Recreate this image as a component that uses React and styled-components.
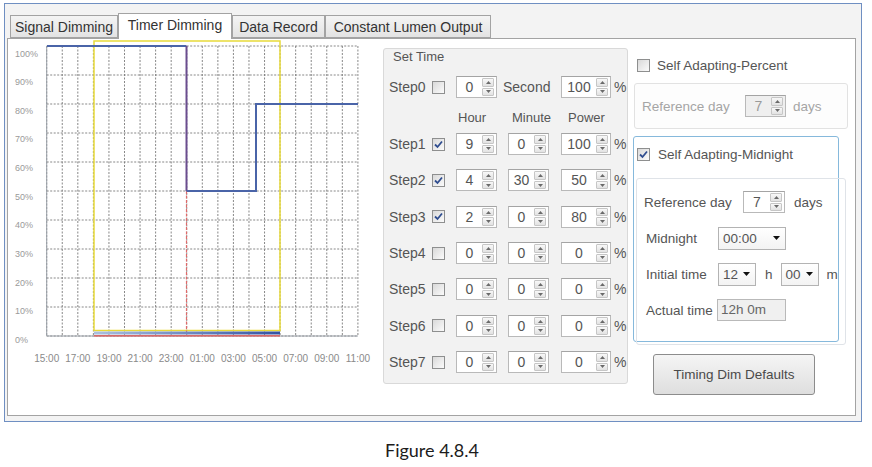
import styled, { createGlobalStyle } from 'styled-components';

const GlobalStyle = createGlobalStyle`
  html, body {
    margin: 0;
    padding: 0;
    background: #fff;
  }
  body {
    font-family: "Liberation Sans", Arial, sans-serif;
    color: #4a4a4a;
  }
  * {
    box-sizing: border-box;
  }
`;

const Window = styled.div`
  margin: 3px 0 0 4px;
  width: 858px;
  height: 419px;
  border: 1px solid #6f8fc2;
  background: #f3f3f3;
  padding: 0 5px 5px 2px;
  display: flex;
  flex-direction: column;
`;

const TabStrip = styled.div`
  display: flex;
  align-items: flex-end;
  height: 34px;
  padding: 9px 0 0 3px;
`;

const Tab = styled.div`
  position: relative;
  z-index: ${(p) => (p.$active ? 2 : 1)};
  width: ${(p) => p.$w}px;
  height: ${(p) => (p.$active ? 26 : 23)}px;
  margin-bottom: ${(p) => (p.$active ? -1 : 0)}px;
  border: 1px solid #a3a3a3;
  border-bottom: ${(p) => (p.$active ? 'none' : '1px solid #a3a3a3')};
  background: ${(p) => (p.$active ? '#fff' : 'linear-gradient(#f4f4f4, #e3e3e3)')};
  font-size: 14px;
  color: #333;
  text-align: center;
  line-height: 22px;
  white-space: nowrap;
`;

const Page = styled.div`
  width: 849px;
  height: 378px;
  border: 1px solid #a3a3a3;
  background: #fff;
  display: flex;
  align-items: flex-start;
`;

const ChartSvg = styled.svg`
  display: block;
  flex-shrink: 0;
  font-family: "Liberation Sans", Arial, sans-serif;
`;

const SetTimeGroup = styled.div`
  margin: 9px 0 0 5px;
  width: 245px;
  height: 336px;
  border: 1px solid #d9d9d9;
  border-radius: 3px;
  background: #f2f2f2;
  flex-shrink: 0;
`;

const GroupTitle = styled.div`
  height: 20px;
  padding-left: 9px;
  font-size: 13px;
  line-height: 16px;
  color: #555;
`;

const StepRow = styled.div`
  display: grid;
  grid-template-columns: 43px 24px 52px 53px 53px auto;
  align-items: center;
  height: ${(p) => p.$h}px;
  padding-left: 5px;
`;

const StepLabel = styled.span`
  font-size: 14px;
  color: #555;
`;

const HeadCell = styled.span`
  font-size: 13px;
  color: #555;
  padding-left: ${(p) => p.$pl}px;
  padding-top: 4px;
`;

const SecondText = styled.span`
  font-size: 14px;
  color: #555;
  margin-left: -5px;
`;

const Percent = styled.span`
  font-size: 14px;
  color: #555;
`;

const Box = styled.span`
  width: 13px;
  height: 13px;
  border: 1px solid #8e8f8f;
  background: linear-gradient(135deg, #d9d9d9, #fbfbfb);
  display: inline-flex;
  align-items: center;
  justify-content: center;
  flex-shrink: 0;
`;

const SpinBox = styled.div`
  display: flex;
  width: ${(p) => p.$w}px;
  height: 22px;
  border: 1px solid #b9b9b9;
  border-top-color: #a4a4a4;
  background: ${(p) => (p.$disabled ? '#efefef' : '#fff')};
  flex-shrink: 0;
`;

const SpinValue = styled.span`
  flex: 1;
  text-align: center;
  font-size: 14px;
  line-height: 20px;
  color: ${(p) => (p.$disabled ? '#9a9a9a' : '#555')};
`;

const SpinButtons = styled.div`
  display: flex;
  flex-direction: column;
  gap: 1px;
  width: 12px;
  margin: 1px 2px 1px 0;
`;

const SpinButton = styled.div`
  flex: 1;
  border: 1px solid #c6c6c6;
  border-radius: 1px;
  background: linear-gradient(#f8f8f8, #e2e2e2);
  display: flex;
  align-items: center;
  justify-content: center;
`;

const RightCol = styled.div`
  margin-left: 5px;
  width: 215px;
  display: flex;
  flex-direction: column;
  align-items: flex-start;
  flex-shrink: 0;
`;

const CheckRow = styled.div`
  display: flex;
  align-items: center;
  gap: ${(p) => p.$gap}px;
  height: ${(p) => p.$h}px;
  margin-top: ${(p) => p.$mt || 0}px;
  padding-left: ${(p) => p.$pl}px;
`;

const CheckText = styled.span`
  font-size: 13.5px;
  color: #555;
`;

const PlainGroup = styled.div`
  margin: 8px 0 0 1px;
  width: 214px;
  height: 46px;
  border: 1px solid #e2e2e2;
  border-radius: 3px;
  background: #fdfdfd;
  display: flex;
  align-items: center;
  padding-left: 7px;
`;

const BlueBox = styled.div`
  margin-top: 7px;
  width: 206px;
  height: 206px;
  border: 1px solid #86b9dc;
  border-radius: 3px;
  background: #fff;
`;

const InnerGroup = styled.div`
  margin: 7px 0 0 2px;
  width: 210px;
  height: 167px;
  border: 1px solid #dfe3e8;
  border-radius: 3px;
  padding: 5px 0 0 7px;
`;

const Field = styled.div`
  display: flex;
  align-items: center;
  height: 36px;
`;

const FieldLabel = styled.span`
  width: ${(p) => p.$w}px;
  margin-left: ${(p) => p.$ml || 0}px;
  font-size: 13.5px;
  color: ${(p) => (p.$disabled ? '#a5a5a5' : '#555')};
  white-space: nowrap;
  flex-shrink: 0;
`;

const Unit = styled.span`
  margin-left: ${(p) => p.$ml}px;
  font-size: 13.5px;
  color: ${(p) => (p.$disabled ? '#a5a5a5' : '#555')};
`;

const Drop = styled.div`
  display: flex;
  align-items: center;
  justify-content: space-between;
  width: ${(p) => p.$w}px;
  height: 23px;
  margin-left: ${(p) => p.$ml || 0}px;
  padding: 0 5px 0 4px;
  border: 1px solid #b3b3b3;
  background: linear-gradient(#ffffff, #f3f3f3);
  font-size: 13.5px;
  color: #555;
  flex-shrink: 0;
`;

const ReadBox = styled.div`
  width: 69px;
  height: 22px;
  border: 1px solid #b9b9b9;
  background: #f0f0f0;
  padding-left: 3px;
  font-size: 13.5px;
  line-height: 20px;
  color: #666;
`;

const DefaultsButton = styled.div`
  margin: 12px 0 0 20px;
  width: 162px;
  height: 41px;
  border: 1px solid #8c8c8c;
  border-radius: 3px;
  background: linear-gradient(#f5f5f5, #dedede);
  display: flex;
  align-items: center;
  justify-content: center;
  font-size: 13.5px;
  color: #4a4a4a;
`;

const Caption = styled.div`
  width: 864px;
  margin-top: 17px;
  text-align: center;
  font-family: Lato, "Open Sans", sans-serif;
  font-size: 18px;
  line-height: 22px;
  color: #1c1c1c;
`;

const Check = ({ checked }) => (
  <Box>
    {checked && (
      <svg width="11" height="11" viewBox="0 0 11 11">
        <path d="M2 5.5 L4.5 8 L9 2.5" fill="none" stroke="#2f4d8f" strokeWidth="1.8" />
      </svg>
    )}
  </Box>
);

const Arrow = ({ down }) => (
  <svg width="5" height="3" viewBox="0 0 5 3">
    <polygon points={down ? '0,0 5,0 2.5,3' : '0,3 5,3 2.5,0'} fill="#6a6a6a" />
  </svg>
);

const Spinner = ({ value, w, disabled }) => (
  <SpinBox $w={w} $disabled={disabled}>
    <SpinValue $disabled={disabled}>{value}</SpinValue>
    <SpinButtons>
      <SpinButton>
        <Arrow />
      </SpinButton>
      <SpinButton>
        <Arrow down />
      </SpinButton>
    </SpinButtons>
  </SpinBox>
);

const Dropdown = ({ value, w, ml }) => (
  <Drop $w={w} $ml={ml}>
    <span>{value}</span>
    <svg width="7" height="4" viewBox="0 0 7 4">
      <polygon points="0,0 7,0 3.5,4" fill="#111" />
    </svg>
  </Drop>
);

const Chart = () => {
  const x0 = 46.7;
  const dx = 15.56;
  const y0 = 46;
  const dy = 29;
  const vlines = Array.from({ length: 21 }, (_, i) => x0 + i * dx);
  const hlines = Array.from({ length: 11 }, (_, i) => y0 + i * dy);
  const ylabels = ['100%', '90%', '80%', '70%', '60%', '50%', '40%', '30%', '20%', '10%', '0%'];
  const xlabels = ['15:00', '17:00', '19:00', '21:00', '23:00', '01:00', '03:00', '05:00', '07:00', '09:00', '11:00'];
  return (
    <ChartSvg width="370" height="335" viewBox="8 39 370 335">
      <defs>
        <linearGradient id="bar" x1="0" x2="1" y1="0" y2="0">
          <stop offset="0" stopColor="#aac0df" />
          <stop offset="1" stopColor="#3353a3" />
        </linearGradient>
      </defs>
      {hlines.map((y, i) => (
        <line key={'h' + i} x1={x0} x2={x0 + 20 * dx} y1={y} y2={y} stroke="#7a7a7a" strokeWidth="0.9" strokeDasharray="2 1.5" />
      ))}
      {vlines.map((x, i) => (
        <line key={'v' + i} x1={x} x2={x} y1={y0} y2={y0 + 10 * dy} stroke="#7a7a7a" strokeWidth="0.9" strokeDasharray="2 1.5" />
      ))}
      <line x1={x0} x2={x0} y1={y0} y2={y0 + 10 * dy} stroke="#9aa0a8" strokeWidth="1" />
      <line x1={x0} x2={x0 + 20 * dx} y1={y0 + 10 * dy} y2={y0 + 10 * dy} stroke="#9aa0a8" strokeWidth="1" />
      {ylabels.map((t, i) => (
        <text key={t} x="15" y={53.5 + i * 28.65 + 3} fontSize="9" fill="#9a9a9a">
          {t}
        </text>
      ))}
      {xlabels.map((t, i) => (
        <text key={t} x={x0 + i * 2 * dx} y="361.5" fontSize="10" fill="#8a8a8a" textAnchor="middle">
          {t}
        </text>
      ))}
      <rect x="94" y="41" width="186" height="289.5" fill="none" stroke="#e8da3a" strokeWidth="1.5" />
      <line x1="186.5" x2="186.5" y1="191" y2="336" stroke="#e06a6a" strokeWidth="1.2" strokeDasharray="3 1.5" />
      <path d="M47 46 H186.5" fill="none" stroke="#4a64a8" strokeWidth="2" />
      <path d="M186.5 46 V191" fill="none" stroke="#6a4d8e" strokeWidth="2" />
      <path d="M186.5 191 H256 V104 H358" fill="none" stroke="#4a64a8" strokeWidth="2" />
      <rect x="94" y="331.5" width="186" height="3" fill="url(#bar)" />
      <rect x="94" y="335" width="186" height="1.6" fill="#d86a6a" />
    </ChartSvg>
  );
};

const steps = [
  { n: 1, on: true, h: 9, m: 0, p: 100 },
  { n: 2, on: true, h: 4, m: 30, p: 50 },
  { n: 3, on: true, h: 2, m: 0, p: 80 },
  { n: 4, on: false, h: 0, m: 0, p: 0 },
  { n: 5, on: false, h: 0, m: 0, p: 0 },
  { n: 6, on: false, h: 0, m: 0, p: 0 },
  { n: 7, on: false, h: 0, m: 0, p: 0 },
];

const App = () => {
  return (
    <>
      <GlobalStyle />
      <Window>
        <TabStrip>
          <Tab $w={108}>Signal Dimming</Tab>
          <Tab $w={114} $active>
            Timer Dimming
          </Tab>
          <Tab $w={93}>Data Record</Tab>
          <Tab $w={166}>Constant Lumen Output</Tab>
        </TabStrip>
        <Page>
          <Chart />
          <SetTimeGroup>
            <GroupTitle>Set Time</GroupTitle>
            <StepRow $h={36}>
              <StepLabel>Step0</StepLabel>
              <Check />
              <Spinner value="0" w={41} />
              <SecondText>Second</SecondText>
              <Spinner value="100" w={50} />
              <Percent>%</Percent>
            </StepRow>
            <StepRow $h={21}>
              <span />
              <span />
              <HeadCell $pl={2}>Hour</HeadCell>
              <HeadCell $pl={4}>Minute</HeadCell>
              <HeadCell $pl={7}>Power</HeadCell>
            </StepRow>
            {steps.map((s) => (
              <StepRow key={s.n} $h={36.33}>
                <StepLabel>Step{s.n}</StepLabel>
                <Check checked={s.on} />
                <Spinner value={s.h} w={41} />
                <Spinner value={s.m} w={41} />
                <Spinner value={s.p} w={50} />
                <Percent>%</Percent>
              </StepRow>
            ))}
          </SetTimeGroup>
          <RightCol>
            <CheckRow $h={20} $mt={16} $pl={4} $gap={7}>
              <Check />
              <CheckText>Self Adapting-Percent</CheckText>
            </CheckRow>
            <PlainGroup>
              <FieldLabel $w={103} $disabled>
                Reference day
              </FieldLabel>
              <Spinner value="7" w={41} disabled />
              <Unit $ml={7} $disabled>
                days
              </Unit>
            </PlainGroup>
            <BlueBox>
              <CheckRow $h={34} $pl={3} $gap={8}>
                <Check checked />
                <CheckText>Self Adapting-Midnight</CheckText>
              </CheckRow>
              <InnerGroup>
                <Field>
                  <FieldLabel $w={99}>Reference day</FieldLabel>
                  <Spinner value="7" w={42} />
                  <Unit $ml={9}>days</Unit>
                </Field>
                <Field>
                  <FieldLabel $w={72} $ml={2}>
                    Midnight
                  </FieldLabel>
                  <Dropdown value="00:00" w={68} />
                </Field>
                <Field>
                  <FieldLabel $w={72} $ml={2}>
                    Initial time
                  </FieldLabel>
                  <Dropdown value="12" w={38} />
                  <Unit $ml={9}>h</Unit>
                  <Dropdown value="00" w={38} ml={8} />
                  <Unit $ml={8}>m</Unit>
                </Field>
                <Field>
                  <FieldLabel $w={71} $ml={2}>
                    Actual time
                  </FieldLabel>
                  <ReadBox>12h 0m</ReadBox>
                </Field>
              </InnerGroup>
            </BlueBox>
            <DefaultsButton>Timing Dim Defaults</DefaultsButton>
          </RightCol>
        </Page>
      </Window>
      <Caption>Figure 4.8.4</Caption>
    </>
  );
};

export default App;
